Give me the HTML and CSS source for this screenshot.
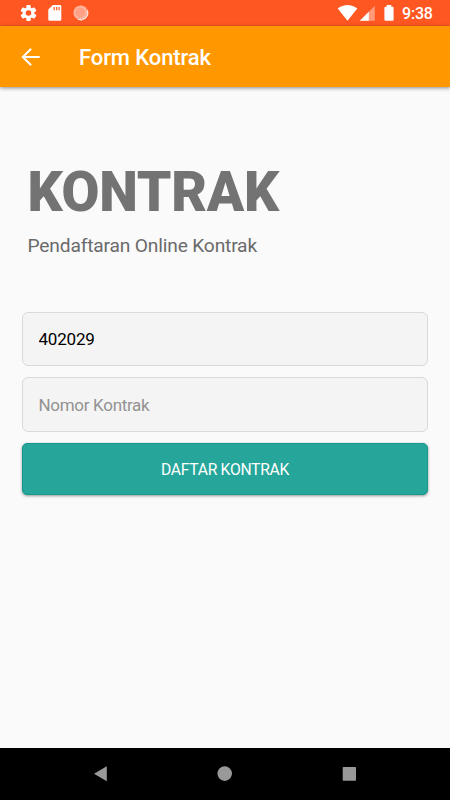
FILE: index.html
```html
<!DOCTYPE html>
<html lang="id">
<head>
<meta charset="utf-8">
<title>Form Kontrak</title>
<link rel="stylesheet" href="styles.css">
</head>
<body>
<div class="screen">
  <div class="status">
    <svg class="status-icons" width="100" height="26" viewBox="0 0 100 26">
      <g fill="#fff">
        <circle cx="28.5" cy="13" r="5.8"/>
        <rect x="26.3" y="5" width="4.4" height="16" rx="1"/>
        <rect x="26.3" y="5" width="4.4" height="16" rx="1" transform="rotate(60 28.5 13)"/>
        <rect x="26.3" y="5" width="4.4" height="16" rx="1" transform="rotate(120 28.5 13)"/>
        <path d="M52.8 5H60a1.3 1.3 0 0 1 1.3 1.3v13.2a1.3 1.3 0 0 1-1.3 1.3H49.6a1.3 1.3 0 0 1-1.3-1.3V9.6z"/>
      </g>
      <circle cx="28.5" cy="13" r="2.8" fill="#ff5722"/>
      <path d="M54.2 7v3.2M56.7 7v3.2M59.1 7v3.2" stroke="#ff5722" stroke-width="1.2"/>
      <circle cx="80.8" cy="12.8" r="7.4" fill="#ffa186"/>
      <circle cx="80.3" cy="12.3" r="5.7" fill="none" stroke="#ffc7b7" stroke-width="1.6" stroke-dasharray="1 1"/>
      <path d="M87.6 10.2A7.3 7.3 0 0 1 78 19.5a7.6 7.6 0 0 0 9.6-9.3z" fill="#fff" stroke="#fff" stroke-width=".5"/>
    </svg>
    <svg class="signal" width="60" height="26" viewBox="0 0 60 26">
      <path d="M2.7 8.5C8.5 3.8 16.5 3.8 22.3 8.5L12.5 20.8z" fill="#fff"/>
      <path d="M39.8 5.8V20.8H24.8z" fill="#ff9a7a"/>
      <path d="M33.8 11.8V20.8H24.8z" fill="#fff"/>
      <path d="M51.7 5h4.6v1.7h1.3a1 1 0 0 1 1 1v12.1a1 1 0 0 1-1 1h-7.2a1 1 0 0 1-1-1V7.7a1 1 0 0 1 1-1h1.3z" fill="#fff"/>
    </svg>
    <span class="clock">9:38</span>
  </div>
  <header class="appbar">
    <svg width="20" height="20" viewBox="0 0 20 20" fill="none" stroke="#fff" stroke-width="2"><path d="M18.7 10H2M10.1 1.7L1.8 10l8.3 8.3"/></svg>
    <h1 class="appbar-title">Form Kontrak</h1>
  </header>
  <main class="content">
    <h2 class="heading">KONTRAK</h2>
    <p class="subtitle">Pendaftaran Online Kontrak</p>
    <form class="form">
      <input class="field" type="text" value="402029">
      <input class="field field-last" type="text" placeholder="Nomor Kontrak">
      <button class="submit" type="button">DAFTAR KONTRAK</button>
    </form>
  </main>
  <nav class="navbar">
    <svg width="450" height="52" viewBox="0 0 450 52" fill="#999">
      <path d="M94 25.8L106.8 18.3V33.2z"/>
      <circle cx="224.7" cy="25.6" r="7.3"/>
      <rect x="342.7" y="19" width="13.3" height="13.7" rx=".8"/>
    </svg>
  </nav>
</div>
</body>
</html>
```
FILE: styles.css
```css
* { box-sizing: border-box; margin: 0; }
body { font-family: Roboto, sans-serif; background: #fafafa; }
.screen { width: 450px; height: 800px; display: flex; flex-direction: column; overflow: hidden; background: #fafafa; }
.status { height: 26px; flex: none; display: flex; align-items: center; background: #ff5722; }
.signal { margin-left: 235px; }
.clock { margin-left: 7px; color: #fff; font-size: 16px; font-weight: 500; line-height: 26px; letter-spacing: -.2px; padding-top: 1px; }
.appbar { height: 61px; flex: none; display: flex; align-items: center; padding: 1px 0 0 21px; background: #ff9800; box-shadow: 0 1px 4px rgba(0,0,0,.45); }
.appbar-title { margin-left: 38px; padding-top: 1px; color: #fff; font-size: 22px; font-weight: 500; line-height: 30px; letter-spacing: -.1px; white-space: nowrap; }
.content { flex: 1; padding: 72px 22px 0; }
.heading { padding-left: 5.5px; color: #737373; font-size: 55px; font-weight: 900; line-height: 66px; letter-spacing: -.3px; white-space: nowrap; }
.subtitle { padding: 8px 0 0 5.5px; color: #6a6a6a; font-size: 19.2px; line-height: 26px; letter-spacing: -.17px; }
.form { display: flex; flex-direction: column; padding-top: 53px; }
.field { width: 100%; height: 54px; margin-bottom: 11px; padding: 0 15.5px; border: 1px solid #dadada; border-radius: 6px; background: #f4f4f4; color: #000; font: 17px Roboto, sans-serif; letter-spacing: -.2px; outline: 0; }
.field-last { height: 55px; }
.field::placeholder { color: #929292; opacity: 1; letter-spacing: -.3px; }
.submit { height: 52px; border: 1px solid #129b8d; border-radius: 5px; background: #26a69a; color: #fff; font: 15.7px Roboto, sans-serif; letter-spacing: -.3px; box-shadow: 0 1px 3px rgba(0,0,0,.4); }
.navbar { height: 52px; flex: none; background: #000; }
.navbar svg { display: block; }
```
